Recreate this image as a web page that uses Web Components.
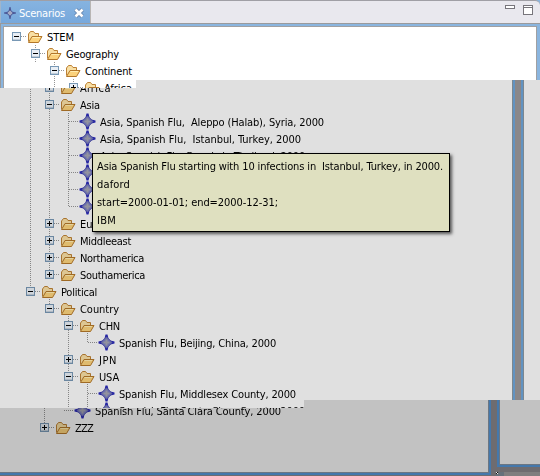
<!DOCTYPE html>
<html lang="en"><head><meta charset="utf-8"><title>Scenarios</title>
<style>html,body{margin:0;width:540px;height:476px;overflow:hidden}</style></head>
<body><scenario-view></scenario-view>
<script>
function define(name, html, ready){
  customElements.define(name, class extends HTMLElement{
    connectedCallback(){
      if(this.shadowRoot) return;
      this.attachShadow({mode:'open'}).innerHTML = html;
      if(ready) ready.call(this, this.shadowRoot);
    }
  });
}
// Label whose letter spacing is fitted to the width given in "w".
define('fit-text', `<style>:host{display:block;white-space:pre;font:11px/17px "DejaVu Sans Condensed","DejaVu Sans",sans-serif}span{display:inline-block}</style><span></span>`, function(r){
  const s=r.querySelector('span'), t=this.getAttribute('text'); s.textContent=t;
  const w=+this.getAttribute('w');
  if(w) s.style.letterSpacing=((w-s.getBoundingClientRect().width)/t.length)+'px';
});
define('folder-icon', `<style>:host{display:block;width:16px;height:14px}svg{display:block}</style>
<svg width="16" height="14" viewBox="0 0 16 14"><path d="M1.5 11.5V4L3.5 1.5H6.5L8 3.5H11.5V6" fill="#f8dfa4" stroke="#bd8134"/><path d="M1.5 12.5L5 6.5H15L11.5 12.5Z" fill="#fbd27c" stroke="#b3772a"/><path d="M5.5 7.5H13" stroke="#ffecb0"/></svg>`);
define('star-icon', `<style>:host{display:block;width:17px;height:17px}svg{display:block}</style>
<svg width="17" height="17" viewBox="0 0 17 17"><path d="M7.5 .5H9.5L10.5 4.5L12.5 6.5L16.5 7.5V9.5L12.5 10.5L10.5 12.5L9.5 16.5H7.5L6.5 12.5L4.5 10.5L.5 9.5V7.5L4.5 6.5L6.5 4.5Z" fill="#2626b8"/><path d="M8.5 2.8L14.2 8.5L8.5 14.2L2.8 8.5Z" fill="#7b7fbe" stroke="#5557ac" stroke-width=".8"/><path d="M8.5 5.5v6M5.5 8.5h6" stroke="#a5a5b2" stroke-width="2"/></svg>`);
define('tree-toggle', `<style>:host{display:block;width:9px;height:9px}svg{display:block}</style>
<svg width="9" height="9"><rect x=".5" y=".5" width="8" height="8" fill="#e8eef5" stroke="#7898b5"/><path d="M1 7.5H8" stroke="#c3ced9"/><path d="M2 4.5H7" stroke="#000"/><path id="v" d="M4.5 2V7" stroke="#000"/></svg>`, function(r){
  if(this.getAttribute('state')==='open') r.getElementById('v').remove();
});
define('tree-row', `<style>:host{display:flex;height:17px;align-items:center;position:relative}
.h{height:1px;background:repeating-linear-gradient(90deg,#959595 0 1px,transparent 1px 2px)}
.g{width:6px}.g.l{width:10px}folder-icon{margin-right:4px}star-icon{margin-right:4px}fit-text{margin-top:1px}</style>`, function(r){
  const x=+this.getAttribute('x'), k=this.getAttribute('kind');
  this.style.paddingLeft=x+'px';
  r.innerHTML += (k==='leaf' ? '<div class="h g l"></div><star-icon></star-icon>' : `<tree-toggle state="${k}"></tree-toggle><div class="h g"></div><folder-icon></folder-icon>`)
   + `<fit-text text="${this.getAttribute('text')}" w="${this.getAttribute('w')}"></fit-text>`;
});
// Tree body: rows plus the dotted guide lines that lie behind them.
define('tree-list', `<style>:host{display:block;position:relative}i{position:absolute;width:1px;background:repeating-linear-gradient(#959595 0 1px,transparent 1px 2px)}</style>`, function(r){
  const d=this.data;
  r.innerHTML += d.guides.map(g=>`<i style="left:${g[0]}px;top:${g[1]}px;height:${g[2]-g[1]}px"></i>`).join('')
    + d.rows.map(o=>`<tree-row x="${o[0]}" kind="${o[1]}" text="${o[2]}" w="${o[3]}"></tree-row>`).join('');
});
define('view-header', `<style>
:host{display:flex;height:23px;box-sizing:border-box;background:#e9e8ee;border-top:1px solid #a09fa5;border-radius:0 5px 0 0;justify-content:space-between}
.tab{display:flex;align-items:center;width:91px;height:23px;box-sizing:border-box;padding:1px 0 0 3px;background:linear-gradient(#86b3e0,#76a8dc);border-right:1px solid #b8b5b4;border-left:1px solid #9fb5cc}
fit-text{color:#fff;width:55px;margin-left:3px}
.ctl{display:flex;gap:8px;padding:4px 7px 0 0}svg{display:block}</style>
<div class="tab"><svg width="12" height="12" viewBox="0 0 12 12"><path d="M5.5 0H6.5L7.5 4.5L12 5.5V6.5L7.5 7.5L6.5 12H5.5L4.5 7.5L0 6.5V5.5L4.5 4.5Z" fill="#4b5796"/><path d="M6 2.8L9.2 6L6 9.2L2.8 6Z" fill="#a5aac4" stroke="#515f9d"/></svg>
<fit-text text="Scenarios" w="46"></fit-text><svg width="10" height="10" viewBox="0 0 10 10"><path d="M1.5 1.5L8.5 8.5M8.5 1.5L1.5 8.5" stroke="#5d7da6" stroke-width="4"/><path d="M1.5 1.5L8.5 8.5M8.5 1.5L1.5 8.5" stroke="#fff" stroke-width="2.7"/></svg></div>
<div class="ctl"><svg width="10" height="10"><rect x=".5" y=".5" width="9" height="3" fill="#fff" stroke="#77757b"/></svg><svg width="10" height="10"><rect x=".5" y=".5" width="9" height="9" fill="#fff" stroke="#77757b"/><path d="M0 2.5H10" stroke="#77757b"/></svg></div>`);
define('tool-tip', `<style>:host{display:block;box-sizing:border-box;width:358px;height:79px;padding:4px 4px;border:1px solid #000;background:#dfe0c0;box-shadow:2px 2px 3px #555}fit-text{height:18px}</style>
<fit-text text="Asia Spanish Flu starting with 10 infections in  Istanbul, Turkey, in 2000." w="346"></fit-text><fit-text text="daford" w="33"></fit-text><fit-text text="start=2000-01-01; end=2000-12-31;" w="181"></fit-text><fit-text text="IBM" w="19"></fit-text>`);
const whiteTree={guides:[[35,17,34],[54,34,68],[73,51,68]],rows:[[12,'open','STEM',27],[31,'open','Geography',53],[50,'open','Continent',47],[69,'closed','Africa',28]]};
const greyTree={guides:[[30,0,212],[49,0,196],[68,34,127],[49,220,230],[68,237,400],[87,254,264],[87,305,400]],rows:[
[45,'closed','Africa',31],[45,'open','Asia',20],
[69,'leaf','Asia, Spanish Flu,  Aleppo (Halab), Syria, 2000',224],[69,'leaf','Asia, Spanish Flu,  Istanbul, Turkey, 2000',201],
[69,'leaf','Asia, Spanish Flu, Bangkok, Thailand, 2000',205],[69,'leaf','',0],[69,'leaf','',0],[69,'leaf','',0],
[45,'closed','Europe',35],[45,'closed','Middleeast',51],[45,'closed','Northamerica',64],[45,'closed','Southamerica',65],
[26,'open','Political',36],[45,'open','Country',39],[64,'open','CHN',21],[88,'leaf','Spanish Flu, Beijing, China, 2000',157],
[64,'closed','JPN',18],[64,'open','USA',20],[88,'leaf','Spanish Flu, Middlesex County, 2000',177],[88,'leaf','Spanish Flu, Santa Clara County, 2000',186]]};
const darkTree={guides:[[44,0,24]],rows:[[64,'leaf','Spanish Flu, Santa Clara County, 2000',186],[40,'closed','ZZZ',18]]};
define('scenario-view', `<style>
:host{display:grid;grid-template:476px/540px;overflow:hidden;color:#000}
section{grid-area:1/1;box-sizing:border-box;height:476px;display:grid;overflow:hidden}
.bot{background:#6e6c70;grid-template:472px 4px/488px 8px 4px 40px}
.bot .l,.bot .r{background:#c2c2c2;box-shadow:0 0 0 1px #6b7683,0 0 0 3px #4478ac}
.bot .l{padding-top:402px;box-sizing:border-box;height:472px}
.bot .r{grid-column:4;height:464px}
.grip{grid-area:2/3/3/5;background:conic-gradient(#111 25%,#eee 0 50%,#111 0 75%,#eee 0) 0 0/2px 2px no-repeat,linear-gradient(90deg,#66717b 8px,#7f7e7f 0)}
.mid{background:#8a8789;grid-template:476px/512px 12px 16px;clip-path:polygon(0 80px,540px 80px,540px 400px,304px 400px,304px 408px,0 408px)}
.mid .l,.mid .r{background:#e0e0e0;box-shadow:0 0 0 1px #7c8790,0 0 0 3px #6293c1}
.mid .l{padding-top:79px}
.mid .r{grid-column:3}
.mid tree-list{filter:brightness(.89)}
.bot tree-list{filter:brightness(.78)}
.top{background:#8ab5df;grid-template:23px 453px/540px;clip-path:polygon(0 0,540px 0,540px 80px,136px 80px,136px 88px,0 88px)}
.body{border:solid #9a9a9c;border-width:1px 0 0 1px;background:#8ab5df;padding:2px 3px 0 2px}
.page{height:450px;box-sizing:border-box;background:#fff;border:1px solid #a0a0a2;padding-top:1px}
.page tree-list{margin-left:-4px}
tool-tip{grid-area:1/1;margin:153px 0 0 92px;z-index:2}
</style>
<section class="bot"><div class="l"></div><div class="r"></div><div class="grip"></div></section>
<section class="mid"><div class="l"></div><div class="r"></div></section>
<section class="top"><view-header></view-header><div class="body"><div class="page"></div></div></section>
<tool-tip></tool-tip>`, function(r){
  const add=(p,d)=>{const t=document.createElement('tree-list');t.data=d;r.querySelector(p).append(t)};
  add('.bot .l',darkTree); add('.mid .l',greyTree); add('.page',whiteTree);
});
</script></body></html>
